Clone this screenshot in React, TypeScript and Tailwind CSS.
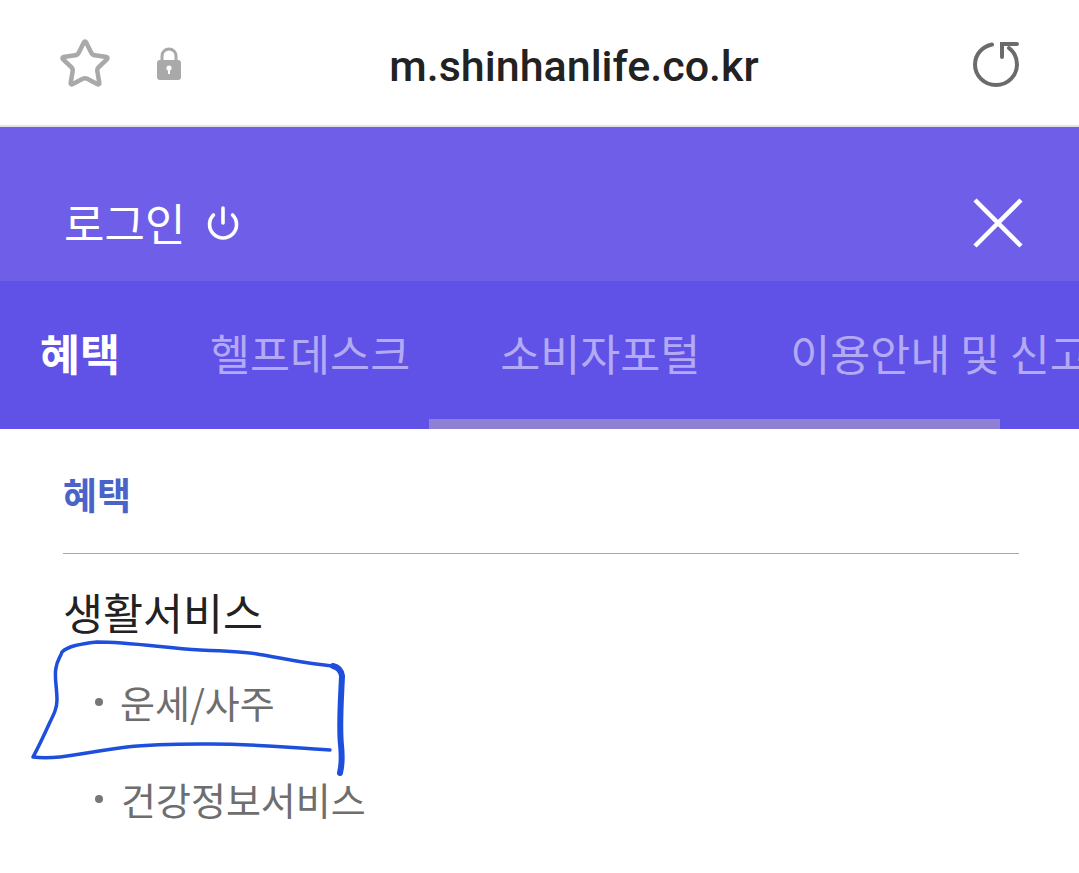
import { Power, Star } from 'lucide-react';

const cjk = "font-['Noto_Sans_CJK_KR','Noto_Sans',sans-serif]";

function LockIcon() {
  return (
    <svg width="26" height="33" viewBox="0 0 26 33" className="ml-[44px] mt-[2px] shrink-0">
      <path d="M6 15V9a7 7 0 0 1 14 0v6" fill="none" stroke="#a9a9a9" strokeWidth="3" />
      <rect x="1" y="13" width="24" height="20" rx="3" fill="#a9a9a9" />
      <circle cx="13" cy="21" r="2.6" fill="#ffffff" />
      <rect x="12" y="21" width="2" height="6" fill="#ffffff" />
    </svg>
  );
}

function ReloadIcon() {
  return (
    <svg width="46" height="46" viewBox="0 0 46 46" fill="none" stroke="#6b6b6b" strokeWidth="4" strokeLinecap="round" className="mt-[3px] shrink-0">
      <path d="M19 3.5C9.5 5.5 2 13 2 23.5C2 34.5 11 44 23 44S44 34.5 44 23.5C44 16.5 41 11 36 7" />
      <path d="M29 16V3h15" />
    </svg>
  );
}

function CloseIcon() {
  return (
    <svg width="50" height="50" viewBox="0 0 50 50" stroke="#ffffff" strokeWidth="4.5" className="mt-[3px]">
      <path d="M2 2l46 46M48 2L2 48" />
    </svg>
  );
}

function Annotation() {
  return (
    <svg className="absolute left-0 top-0 pointer-events-none" width="1079" height="873" fill="none" stroke="#1e4fdc" strokeLinecap="round" strokeLinejoin="round">
      <path
        strokeWidth="3.5"
        d="M330 750C290 748 250 743 200 744C170 744 145 745 127 747C100 750 80 755 60 757C50 758 40 758 33 757C38 748 45 733 50 722C54 714 57 708 57 700C57 688 54 676 56 668C57 660 60 658 62 652C68 646 80 644 97 642C130 642 165 648 200 650C225 651 245 652 257 654C280 658 310 664 333 666"
      />
      <path strokeWidth="6" d="M333 666C338 667 341 670 342 676C341 700 339 725 341 745C342 755 342 765 340 773" />
    </svg>
  );
}

const tabs = ['헬프데스크', '소비자포털', '이용안내 및 신고'];

export default function App() {
  return (
    <div className={`relative h-[873px] w-[1079px] overflow-hidden bg-white ${cjk}`}>
      <header className="flex h-[127px] items-center border-b-2 border-[#e4e4e4] pl-[58px] pr-[60px]">
        <Star size={54} color="#a9a9a9" strokeWidth={2} className="mt-[3px] shrink-0" />
        <LockIcon />
        <div className="flex-1 pt-[7px] pr-[7px] text-center font-['Roboto',sans-serif] text-[43px] font-medium text-[#222222]">
          m.shinhanlife.co.kr
        </div>
        <ReloadIcon />
      </header>

      <div className="flex h-[154px] items-center justify-between bg-[#6e5ee8] pl-[64px] pr-[56px] pt-[40px] pb-[6px]">
        <div className="flex items-center gap-[20px] text-white">
          <span className="mt-[2px] text-[44px] leading-none">로그인</span>
          <Power size={36} strokeWidth={2.4} className="mt-[4px]" />
        </div>
        <CloseIcon />
      </div>

      <nav className="relative flex h-[148px] items-center overflow-hidden bg-[#6052e6] pb-[5px] pl-[40px]">
        <span className="shrink-0 text-[43.5px] font-bold text-white">혜택</span>
        {tabs.map((tab) => (
          <span key={tab} className="ml-[90px] shrink-0 whitespace-nowrap text-[43.5px] text-[#b3a9f4]">
            {tab}
          </span>
        ))}
        <div className="absolute bottom-0 left-[429px] h-[10px] w-[571px] bg-[#8f80d6]" />
      </nav>

      <main className="pl-[63px] pr-[60px]">
        <div className="flex h-[125px] items-center border-b border-[#a8a8a8] pt-[7px] text-[37px] font-bold text-[#4a63c9]">
          혜택
        </div>
        <div className="pt-[27px] text-[43.5px] leading-[62px] text-[#222222]">생활서비스</div>
        <ul className="pl-[32px] pt-[31px] text-[38px] leading-[56px] text-[#6e6e6e]">
          <li className="flex items-center">
            <span className="mr-[17px] h-[8px] w-[8px] rounded-full bg-[#777777]" />
            운세/사주
          </li>
          <li className="mt-[41px] flex items-center">
            <span className="mr-[18px] h-[8px] w-[8px] rounded-full bg-[#777777]" />
            건강정보서비스
          </li>
        </ul>
      </main>

      <Annotation />
    </div>
  );
}
